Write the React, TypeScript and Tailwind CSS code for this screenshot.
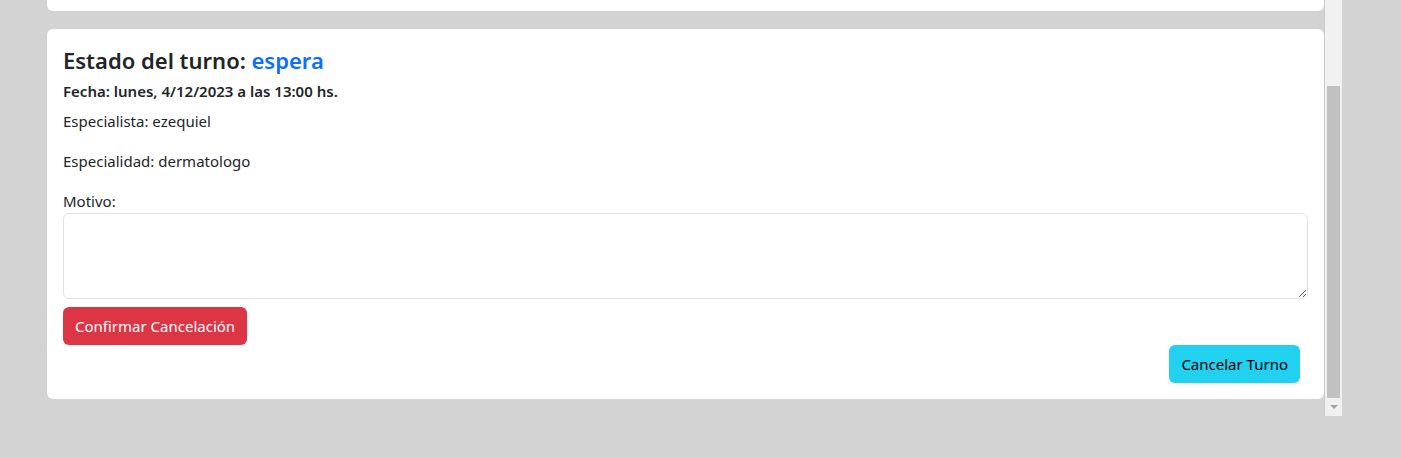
export default function App() {
  return (
    <div className="h-[458px] w-full overflow-hidden bg-[#d3d3d3] font-['Noto_Sans',sans-serif] text-[#212529]">
      <div className="flex pl-[47px]">
        <div className="w-[1277px]">
          <div className="h-[11px] rounded-b-md bg-white" />

          <div className="mt-[18px] rounded-md bg-white p-4">
            <h4 className="mb-[7px] pt-px text-[22px] font-semibold leading-[29px]">
              Estado del turno: <span className="text-[#0d6efd]">espera</span>
            </h4>
            <h6 className="mb-2 text-[15px] font-semibold leading-[19px]">
              Fecha: lunes, 4/12/2023 a las 13:00 hs.
            </h6>
            <p className="mb-4 text-[15px] leading-6">Especialista: ezequiel</p>
            <p className="mb-4 text-[15px] leading-6">Especialidad: dermatologo</p>
            <label className="block text-[15px] leading-6">Motivo:</label>
            <textarea className="block h-[86px] w-full rounded-md border border-[#dee2e6] px-3 py-1.5 outline-none" />
            <button className="mt-2 h-[38px] rounded-md bg-[#dc3545] px-3 text-[15px] text-white">
              Confirmar Cancelación
            </button>
            <div className="flex justify-end pr-2">
              <button className="h-[38px] rounded-md bg-[#22d0f0] px-3 text-[15px] text-[#000]">
                Cancelar Turno
              </button>
            </div>
          </div>
        </div>

        <div className="flex h-[416px] w-[18px] flex-col border-l border-[#c9c9c9] bg-[#f1f1f1]">
          <div className="mx-[2px] mt-[86px] h-[312px] bg-[#c1c1c1]" />
          <div className="flex flex-1 items-center justify-center">
            <svg width="8" height="5" viewBox="0 0 8 5">
              <path d="M0 0h8L4 4z" fill="#a3a3a3" />
            </svg>
          </div>
        </div>
      </div>
    </div>
  );
}
